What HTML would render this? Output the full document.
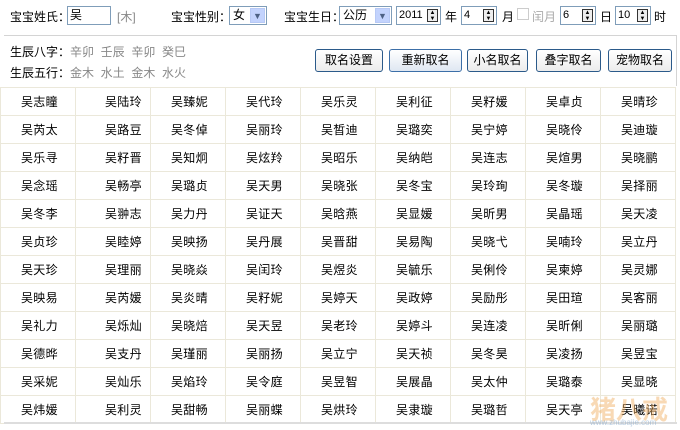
<!DOCTYPE html>
<html><head><meta charset="utf-8"><style>
*{margin:0;padding:0;box-sizing:border-box}
body{width:680px;height:430px;background:#fff;font-family:"Liberation Sans","Noto Sans CJK SC",sans-serif;font-size:12px;color:#000;position:relative;overflow:hidden}
.a{position:absolute;white-space:nowrap}
.inp{position:absolute;border:1px solid #7f9db9;background:#fff;height:19px;font-size:12px;line-height:17px;padding-left:2px}
.sel{position:absolute;border:1px solid #7f9db9;height:19px;line-height:17px;padding-left:3px;background:#fff}
.dd{position:absolute;right:1px;top:1px;width:15px;height:15px;background:#c3d3fd;border:1px solid #b7c9f5;color:#4d6185;font-size:9px;text-align:center;line-height:14px}
.spin{position:absolute;right:2px;top:2px;width:11px;height:13px;border:1px solid #333;background:#eee;font-size:6px;line-height:6px;text-align:center}
.btn{position:absolute;top:49px;height:23px;border:1px solid #2b5a8a;border-radius:3px;background:linear-gradient(#fff,#ececec);text-align:center;line-height:21px;font-size:12px}
.g{color:#888}
table{position:absolute;left:0px;top:87px;border-collapse:collapse}
td{width:75px;height:28px;border:1px solid #ebe8da;font-size:12px;padding-left:20px;letter-spacing:0.3px}
</style></head><body>
<div class="a" style="left:10px;top:8px">宝宝姓氏：</div>
<div class="inp" style="left:67px;top:6px;width:44px">吴</div>
<div class="a g" style="left:117px;top:8px">[木]</div>
<div class="a" style="left:171px;top:8px">宝宝性别：</div>
<div class="sel" style="left:229px;top:6px;width:38px">女<div class="dd">▼</div></div>
<div class="a" style="left:284px;top:8px">宝宝生日：</div>
<div class="sel" style="left:339px;top:6px;width:53px">公历<div class="dd">▼</div></div>
<div class="inp" style="left:396px;top:6px;width:45px;font-size:11px">2011<div class="spin">▲<br>▼</div></div>
<div class="a" style="left:445px;top:8px">年</div>
<div class="inp" style="left:461px;top:6px;width:36px;font-size:11px">4<div class="spin">▲<br>▼</div></div>
<div class="a" style="left:502px;top:8px">月</div>
<div class="a" style="left:517px;top:8px;width:12px;height:12px;border:1px solid #ccc"></div>
<div class="a g" style="left:532px;top:8px;color:#aaa">闰月</div>
<div class="inp" style="left:560px;top:6px;width:36px;font-size:11px">6<div class="spin">▲<br>▼</div></div>
<div class="a" style="left:600px;top:8px">日</div>
<div class="inp" style="left:615px;top:6px;width:36px;font-size:11px">10<div class="spin">▲<br>▼</div></div>
<div class="a" style="left:654px;top:8px">时</div>
<div class="a" style="left:4px;top:35px;width:673px;height:51px;border-top:1px solid #d4d4d4;border-right:1px solid #d4d4d4"></div>
<div class="a" style="left:10px;top:43px">生辰八字：<span class="g">辛卯&nbsp; 壬辰&nbsp; 辛卯&nbsp; 癸巳</span></div>
<div class="a" style="left:10px;top:64px">生辰五行：<span class="g">金木&nbsp; 水土&nbsp; 金木&nbsp; 水火</span></div>
<div class="btn" style="left:315px;width:68px">取名设置</div>
<div class="btn" style="left:389px;width:73px;border-color:#3c6fa8;background:linear-gradient(#fff,#dfe7f2)">重新取名</div>
<div class="btn" style="left:467px;width:61px">小名取名</div>
<div class="btn" style="left:536px;width:65px">叠字取名</div>
<div class="btn" style="left:608px;width:64px">宠物取名</div>
<table>
<tr><td>吴志瞳</td><td style="padding-left:29px">吴陆玲</td><td>吴臻妮</td><td>吴代玲</td><td>吴乐灵</td><td>吴利征</td><td>吴籽媛</td><td>吴卓贞</td><td>吴晴珍</td></tr>
<tr><td>吴芮太</td><td style="padding-left:29px">吴路豆</td><td>吴冬倬</td><td>吴丽玲</td><td>吴皙迪</td><td>吴璐奕</td><td>吴宁婷</td><td>吴晓伶</td><td>吴迪璇</td></tr>
<tr><td>吴乐寻</td><td style="padding-left:29px">吴籽晋</td><td>吴知炯</td><td>吴炫羚</td><td>吴昭乐</td><td>吴纳皑</td><td>吴连志</td><td>吴煊男</td><td>吴晓鹂</td></tr>
<tr><td>吴念瑶</td><td style="padding-left:29px">吴畅亭</td><td>吴璐贞</td><td>吴天男</td><td>吴晓张</td><td>吴冬宝</td><td>吴玲珣</td><td>吴冬璇</td><td>吴择丽</td></tr>
<tr><td>吴冬李</td><td style="padding-left:29px">吴翀志</td><td>吴力丹</td><td>吴证天</td><td>吴晗燕</td><td>吴显媛</td><td>吴昕男</td><td>吴晶瑶</td><td>吴天凌</td></tr>
<tr><td>吴贞珍</td><td style="padding-left:29px">吴睦婷</td><td>吴映扬</td><td>吴丹展</td><td>吴晋甜</td><td>吴易陶</td><td>吴晓弋</td><td>吴喃玲</td><td>吴立丹</td></tr>
<tr><td>吴天珍</td><td style="padding-left:29px">吴理丽</td><td>吴晓焱</td><td>吴闰玲</td><td>吴煜炎</td><td>吴毓乐</td><td>吴俐伶</td><td>吴柬婷</td><td>吴灵娜</td></tr>
<tr><td>吴映易</td><td style="padding-left:29px">吴芮媛</td><td>吴炎晴</td><td>吴籽妮</td><td>吴婷天</td><td>吴政婷</td><td>吴励彤</td><td>吴田瑄</td><td>吴客丽</td></tr>
<tr><td>吴礼力</td><td style="padding-left:29px">吴烁灿</td><td>吴晓焙</td><td>吴天昱</td><td>吴老玲</td><td>吴婷斗</td><td>吴连凌</td><td>吴昕俐</td><td>吴丽璐</td></tr>
<tr><td>吴德晔</td><td style="padding-left:29px">吴支丹</td><td>吴瑾丽</td><td>吴丽扬</td><td>吴立宁</td><td>吴天祯</td><td>吴冬昊</td><td>吴凌扬</td><td>吴昱宝</td></tr>
<tr><td>吴采妮</td><td style="padding-left:29px">吴灿乐</td><td>吴焰玲</td><td>吴令庭</td><td>吴昱智</td><td>吴展晶</td><td>吴太仲</td><td>吴璐泰</td><td>吴显晓</td></tr>
<tr><td>吴炜媛</td><td style="padding-left:29px">吴利灵</td><td>吴甜畅</td><td>吴丽蝶</td><td>吴烘玲</td><td>吴隶璇</td><td>吴璐哲</td><td>吴天亭</td><td>吴曦诺</td></tr>
</table>
<div class="a" style="left:4px;top:422px;width:673px;border-top:2px solid #ddd"></div>
<div class="a" style="left:590px;top:390px;font-size:26px;color:rgba(240,170,90,0.45);font-weight:bold">猪八戒</div>
<div class="a" style="left:590px;top:418px;font-size:8px;color:rgba(120,160,200,0.5)">www.zhubajie.com</div>
</body></html>
